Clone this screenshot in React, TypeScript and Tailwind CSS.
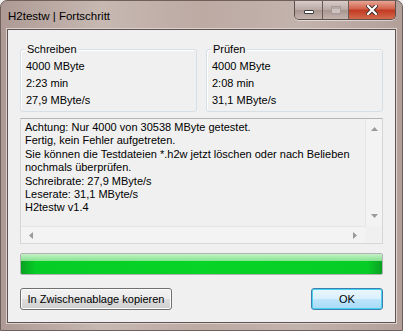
const font = "font-['Segoe_UI','Liberation_Sans',Arial,sans-serif]";

function GroupBox({ title, lines }: { title: string; lines: string[] }) {
  return (
    <div className="relative flex-1 h-[63px] rounded-[3px] border border-[#d5dfe5] shadow-[inset_1px_1px_0_#ffffff]">
      <span className="absolute left-[4px] top-[-9px] bg-[#f0f0f0] px-[2px] text-[11px] leading-[16px] text-black">
        {title}
      </span>
      <div className="flex flex-col pl-[5px] pt-[8px]">
        {lines.map((l) => (
          <div key={l} className="h-[17px] text-[11px] leading-[17px] text-black">
            {l}
          </div>
        ))}
      </div>
    </div>
  );
}

export default function App() {
  const log = [
    "Achtung: Nur 4000 von 30538 MByte getestet.",
    "Fertig, kein Fehler aufgetreten.",
    "Sie können die Testdateien *.h2w jetzt löschen oder nach Belieben",
    "nochmals überprüfen.",
    "Schreibrate: 27,9 MByte/s",
    "Leserate: 31,1 MByte/s",
    "H2testw v1.4",
  ];

  return (
    <div className={`${font} w-[403px] h-[331px] overflow-hidden bg-[#f0f0f0]`}>
      <div className="flex flex-col w-[403px] h-[331px] rounded-t-[7px] border border-[#6f605c] bg-[linear-gradient(90deg,#ae9a94_0%,#c7b8b2_25%,#bcaaa3_50%,#c3b3ad_75%,#b29f99_100%)]">
        {/* title bar */}
        <div className="flex h-[28px] shrink-0 items-start">
          <div className="pl-[7px] pt-[7px] text-[11.5px] leading-[16px] text-black">
            H2testw | Fortschritt
          </div>
          <div className="ml-auto mr-[6px] flex h-[19px] overflow-hidden rounded-b-[5px] border border-t-0 border-[#5d4f4c] shadow-[0_1px_0_rgba(255,255,255,0.5)]">
            <div className="flex w-[28px] items-center justify-center border-r border-[#6a5b58] bg-[linear-gradient(#d8ccc8,#b8a8a3_50%,#a8958f_51%,#c2b3ae)]">
              <div className="mt-[4px] h-[4px] w-[10px] rounded-[1px] border border-[#3c3c3c] bg-white" />
            </div>
            <div className="flex w-[26px] items-center justify-center border-r border-[#6a5b58] bg-[linear-gradient(#d8ccc8,#b8a8a3_50%,#a8958f_51%,#c2b3ae)]">
              <div className="h-[8px] w-[10px] border border-[#a89a96] bg-[#cfc3bf] shadow-[inset_0_2px_0_#b7aaa6]" />
            </div>
            <div className="flex w-[46px] items-center justify-center bg-[linear-gradient(#e8a493,#d0604a_45%,#c0391f_50%,#d36a4e)]">
              <svg width="12" height="10" viewBox="0 0 12 10">
                <path d="M2 1 L10 9 M10 1 L2 9" stroke="#3a2a28" strokeWidth="4" strokeLinecap="square" />
                <path d="M2 1 L10 9 M10 1 L2 9" stroke="#ffffff" strokeWidth="2.2" strokeLinecap="square" />
              </svg>
            </div>
          </div>
        </div>

        {/* client area */}
        <div className="mx-[6px] mb-[7px] flex flex-1 flex-col border border-[#5e5350] bg-[#f0f0f0] px-[12px] pt-[19px] shadow-[0_0_0_1px_#ddd2ce]">
          <div className="flex gap-[9px]">
            <GroupBox title="Schreiben" lines={["4000 MByte", "2:23 min", "27,9 MByte/s"]} />
            <GroupBox title="Prüfen" lines={["4000 MByte", "2:08 min", "31,1 MByte/s"]} />
          </div>

          {/* log box */}
          <div className="mt-[6px] grid h-[126px] grid-cols-[1fr_17px] grid-rows-[1fr_17px] border border-[#d6d6d6] border-t-[#b5b5b5] bg-[#f0f0f0]">
            <div className="pl-[4px] pt-[2px] text-[11px] leading-[13.4px] text-black whitespace-nowrap overflow-hidden">
              {log.map((l) => (
                <div key={l}>{l}</div>
              ))}
            </div>
            <div className="flex flex-col items-center justify-between border-l border-[#e6e6e6] bg-[#f3f3f3] py-[8px]">
              <svg width="7" height="4" viewBox="0 0 7 4">
                <path d="M3.5 0 L7 4 L0 4 Z" fill="#9a9a9a" />
              </svg>
              <svg width="7" height="4" viewBox="0 0 7 4">
                <path d="M0 0 L7 0 L3.5 4 Z" fill="#9a9a9a" />
              </svg>
            </div>
            <div className="flex items-center justify-between border-t border-[#e6e6e6] bg-[#f3f3f3] px-[8px]">
              <svg width="4" height="7" viewBox="0 0 4 7">
                <path d="M0 3.5 L4 0 L4 7 Z" fill="#9a9a9a" />
              </svg>
              <svg width="4" height="7" viewBox="0 0 4 7">
                <path d="M0 0 L4 3.5 L0 7 Z" fill="#9a9a9a" />
              </svg>
            </div>
            <div className="bg-[#f0f0f0]" />
          </div>

          {/* progress */}
          <div className="mt-[9px] h-[22px] rounded-[2px] border border-[#b2b2b2] bg-[linear-gradient(90deg,#0aa022_0%,#06cc26_4%,#06d426_50%,#06cc26_96%,#0aa022_100%)]">
            <div className="h-[7px] bg-[linear-gradient(#d9f7d9,#93e79a)] opacity-90" />
          </div>

          {/* buttons */}
          <div className="mt-[13px] flex justify-between">
            <div className="flex h-[22px] w-[152px] items-center justify-center rounded-[3px] border border-[#707070] bg-[linear-gradient(#f2f2f2,#ebebeb_50%,#dddddd_51%,#cfcfcf)] text-[11px] text-black shadow-[inset_0_0_0_1px_#fcfcfc]">
              In Zwischenablage kopieren
            </div>
            <div className="flex h-[22px] w-[72px] items-center justify-center rounded-[3px] border border-[#3c7fb1] bg-[linear-gradient(#eaf6fd,#d9f0fc_50%,#bee6fd_51%,#a7d9f5)] text-[11px] text-black shadow-[inset_0_0_0_1px_#48d2f0]">
              OK
            </div>
          </div>
        </div>
      </div>
    </div>
  );
}
